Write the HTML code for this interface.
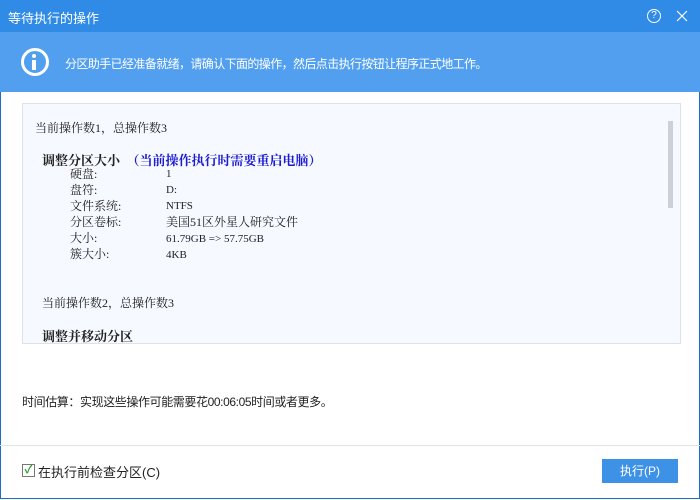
<!DOCTYPE html><html><head><meta charset="utf-8"><style>
body{margin:0;width:700px;height:500px;background:#fff;position:relative;overflow:hidden;font-family:"Liberation Sans","Noto Sans CJK SC",sans-serif;font-size:12px;color:#222}
.a{position:absolute;white-space:nowrap}
#win{position:absolute;left:0;top:0;width:698px;height:498px;border:1px solid #1c6fc4;border-top:none}
.s{font-family:"Liberation Serif","Noto Serif CJK SC","Noto Sans CJK SC",serif;font-size:12px}
</style></head><body>
<div id="win"></div>
<div class="a" style="left:0;top:0;width:700px;height:32px;background:#2f8be6"></div>
<div class="a" style="left:8px;top:8px;color:#fff;font-size:13px">等待执行的操作</div>
<div class="a" style="left:647px;top:9px;width:12px;height:12px;border:1px solid #fff;border-radius:50%;color:#fff;font-size:10px;line-height:12px;text-align:center">?</div>
<svg class="a" style="left:676px;top:10px" width="12" height="12"><path d="M1 1L11 11M11 1L1 11" stroke="#fff" stroke-width="1.2"/></svg>
<div class="a" style="left:0;top:32px;width:700px;height:60px;background:#519fee"></div>
<div class="a" style="left:21px;top:48px;width:22px;height:22px;border:3px solid #fff;border-radius:50%"></div>
<div class="a" style="left:32px;top:54px;width:4px;height:4px;background:#fff;border-radius:50%"></div>
<div class="a" style="left:32px;top:60px;width:4px;height:10px;background:#fff"></div>
<div class="a" style="left:65px;top:55px;color:#fff;font-size:12px;letter-spacing:-0.6px">分区助手已经准备就绪，请确认下面的操作，然后点击执行按钮让程序正式地工作。</div>
<div class="a" style="left:22px;top:103px;width:657px;height:239px;background:#f6f9ff;border:1px solid #dde2ea"></div>
<div class="a" style="left:668px;top:121px;width:5px;height:87px;background:#cdd0d6"></div>
<div class="a s" style="left:35px;top:119px">当前操作数1，总操作数3</div>
<div class="a s" style="left:42px;top:150px;font-weight:bold;font-size:13px">调整分区大小 &nbsp;<span style="color:#1a1ad0">（当前操作执行时需要重启电脑）</span></div>
<div class="a s" style="left:70px;top:166px;line-height:16px">硬盘:<br>盘符:<br>文件系统:<br>分区卷标:<br>大小:<br>簇大小:</div>
<div class="a s" style="left:166px;top:166px;line-height:16px;font-size:11px">1<br>D:<br>NTFS<br><span style="font-size:12px">美国51区外星人研究文件</span><br>61.79GB =&gt; 57.75GB<br>4KB</div>
<div class="a s" style="left:42px;top:294px">当前操作数2，总操作数3</div>
<div class="a s" style="left:42px;top:326px;font-weight:bold;font-size:13px">调整并移动分区</div>
<div class="a" style="left:22px;top:393px;letter-spacing:-0.4px">时间估算：实现这些操作可能需要花00:06:05时间或者更多。</div>
<div class="a" style="left:0;top:445px;width:700px;height:1px;background:#e3e3e3"></div>
<div class="a" style="left:22px;top:464px;width:11px;height:11px;border:1px solid #777;background:#fff;color:#2a9a2a;font-size:11px;line-height:11px;text-align:center;font-weight:bold">✓</div>
<div class="a" style="left:38px;top:462px;font-size:13px">在执行前检查分区(C)</div>
<div class="a" style="left:602px;top:459px;width:76px;height:24px;background:#3d92e6;color:#fff;text-align:center;line-height:24px">执行(P)</div>
</body></html>
